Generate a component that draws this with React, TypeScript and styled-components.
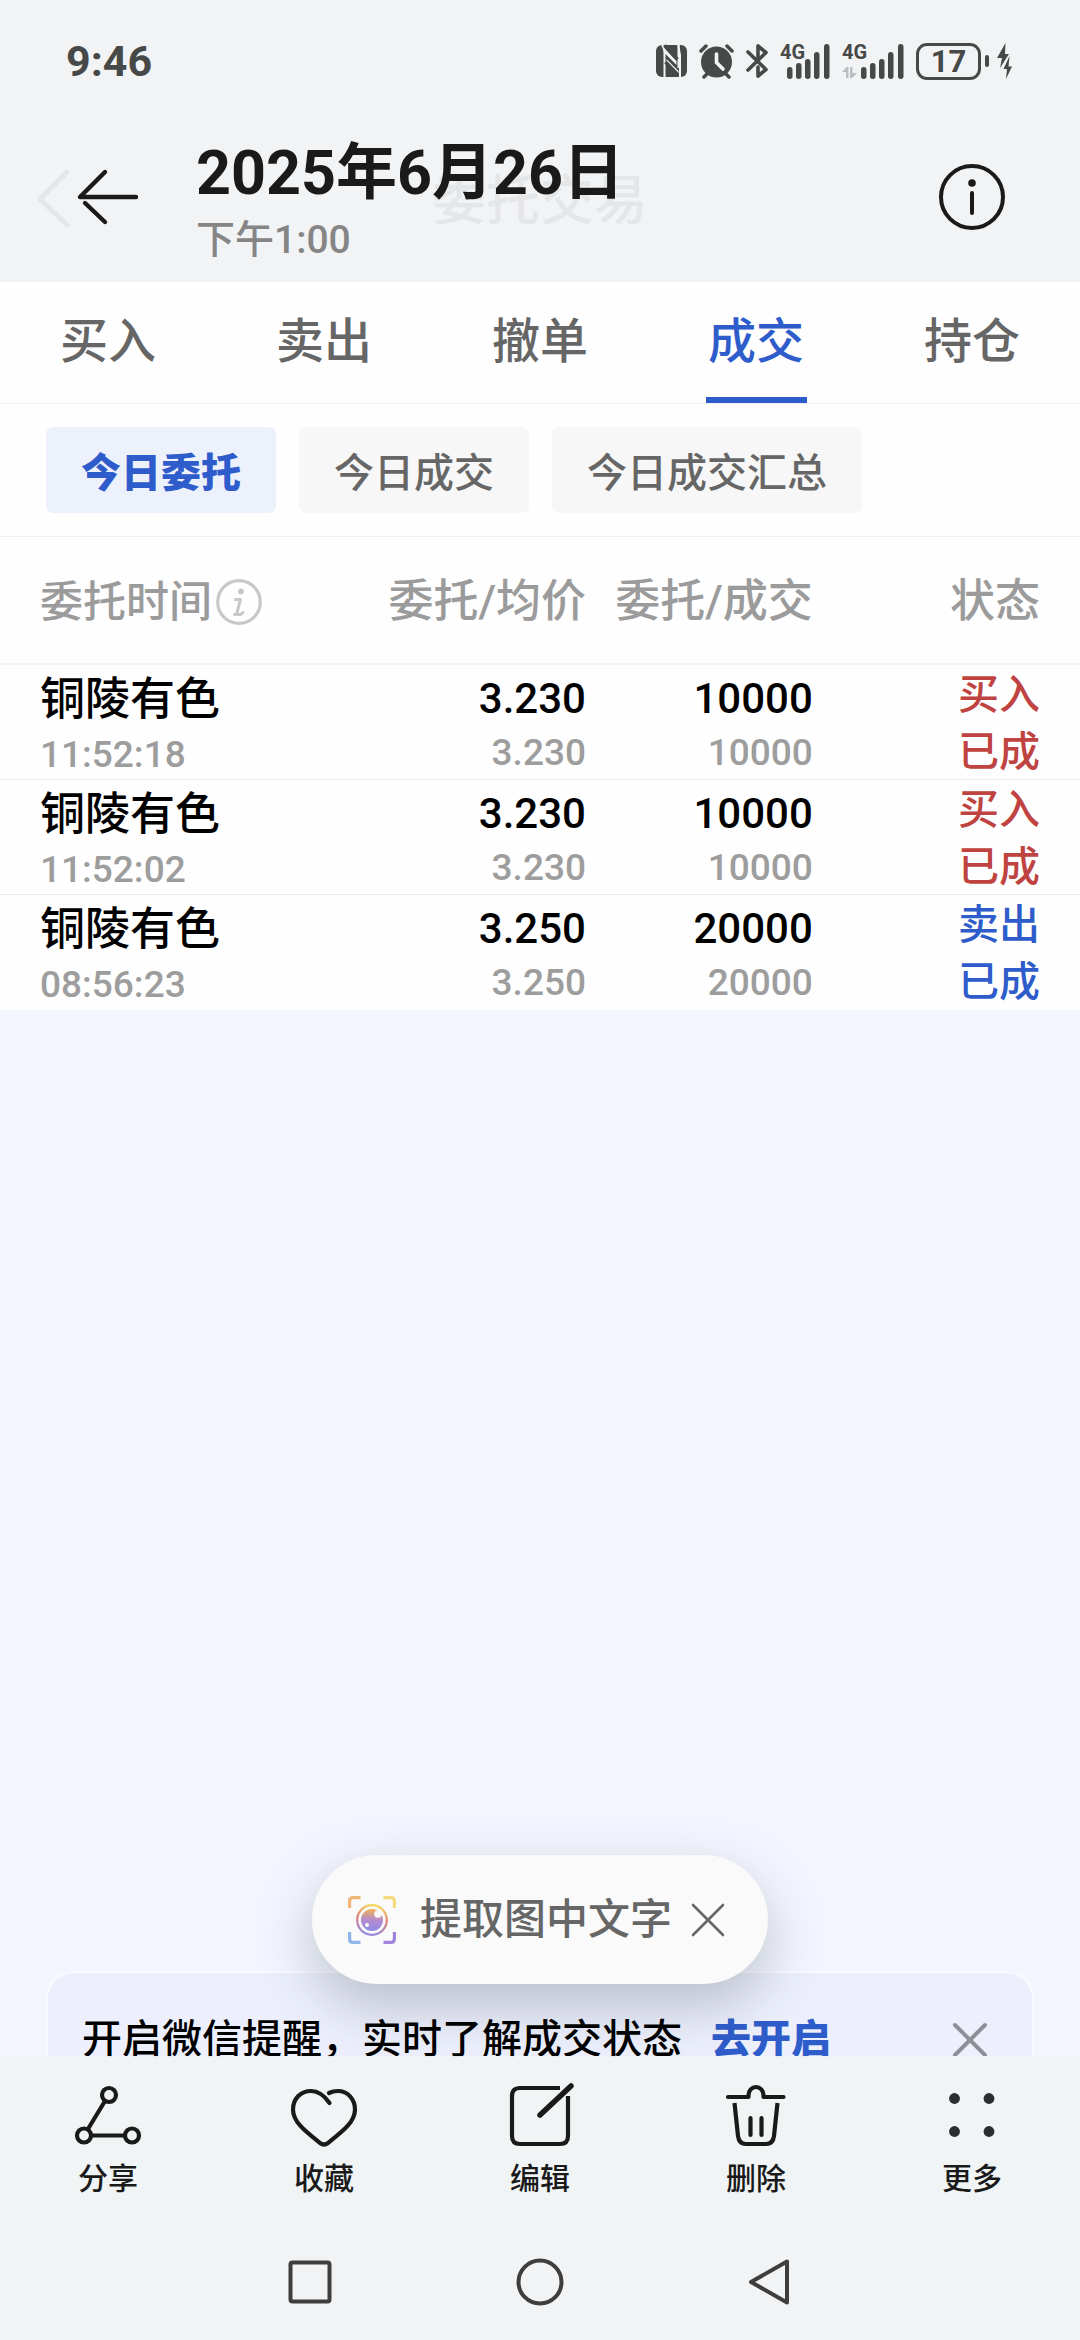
import React, { useState } from "react";
import styled, { createGlobalStyle, css } from "styled-components";

const blue = "#2f5ccb";
const red = "#bf4341";

const GlobalStyle = createGlobalStyle`
  *, *::before, *::after { box-sizing: border-box; }
  body {
    margin: 0;
    background: #f2f3f5;
    font-family: Roboto, "Noto Sans CJK SC", sans-serif;
    color: #1a1a1a;
  }
  button {
    border: 0;
    padding: 0;
    background: none;
    font: inherit;
    color: inherit;
    cursor: pointer;
  }
  svg { display: block; flex: none; }
`;

const Screen = styled.div`
  display: flex;
  flex-direction: column;
  min-height: 100vh;
  background: #f2f3f5;
`;

/* ---------- system status bar ---------- */

const StatusBar = styled.div`
  display: flex;
  align-items: center;
  justify-content: space-between;
  height: 122px;
  padding: 0 68px 0 66px;
  color: #474948;
`;

const Clock = styled.time`
  font-size: 43px;
  line-height: 60px;
  font-weight: 700;
`;

const StatusIcons = styled.div`
  display: flex;
  align-items: center;
  gap: 12px;
`;

const Battery = styled.div`
  display: flex;
  align-items: center;
  gap: 4px;
`;

const BatteryLevel = styled.span`
  width: 65px;
  height: 37px;
  border: 3px solid #474948;
  border-radius: 11px;
  font-size: 31px;
  line-height: 31px;
  font-weight: 700;
  text-align: center;
`;

const BatteryNub = styled.span`
  width: 4px;
  height: 12px;
  border-radius: 2px;
  background: #474948;
`;

/* ---------- viewer header ---------- */

const Header = styled.header`
  position: relative;
  display: flex;
  align-items: center;
  height: 160px;
  padding: 0 72px 10px 72px;
`;

const GhostTitle = styled.div`
  position: absolute;
  inset: 0;
  display: flex;
  align-items: center;
  justify-content: center;
  color: #e5e6e8;
  font-size: 54px;
  line-height: 76px;
  font-weight: 500;
`;

const GhostChevron = styled.svg`
  position: absolute;
  left: 36px;
  top: 46px;
`;

const HeaderButton = styled.button`
  position: relative;
  flex: none;
`;

const Titles = styled.div`
  position: relative;
  flex: 1;
  padding: 12px 0 0 52px;
`;

const Title = styled.h1`
  margin: 0;
  font-size: 61px;
  line-height: 74px;
  font-weight: 700;
`;

const Subtitle = styled.p`
  margin: 0;
  font-size: 39px;
  line-height: 60px;
  font-weight: 500;
  color: #858585;
`;

/* ---------- photographed page ---------- */

const Photo = styled.main`
  position: relative;
  display: flex;
  flex-direction: column;
  flex: 1;
  background: #f3f6fe;
`;

const Tabs = styled.nav`
  display: grid;
  grid-template-columns: repeat(5, 1fr);
  background: #fefefe;
  border-bottom: 1px solid #f0f0f0;
`;

const Tab = styled.button<{ $active: boolean }>`
  display: flex;
  flex-direction: column;
  align-items: center;
  justify-content: space-between;
  height: 121px;
  padding-top: 24px;
  font-size: 48px;
  line-height: 72px;
  font-weight: 500;
  color: ${(p) => (p.$active ? blue : "#666")};

  &::after {
    content: "";
    width: 101px;
    height: 6px;
    background: ${(p) => (p.$active ? blue : "transparent")};
  }
`;

const Chips = styled.div`
  display: flex;
  gap: 23px;
  padding: 23px 46px;
  background: #fefefe;
  border-bottom: 1px solid #f0f0f0;
`;

const Chip = styled.button<{ $active: boolean }>`
  height: 86px;
  padding: 0 35px;
  border-radius: 7px;
  background: #f7f7f7;
  font-size: 40px;
  font-weight: 500;
  color: #666;
  ${(p) =>
    p.$active &&
    css`
      background: #edf1fc;
      font-weight: 900;
      color: ${blue};
    `}
`;

const Orders = styled.table`
  width: 100%;
  table-layout: fixed;
  border-collapse: collapse;
  background: #fefefe;
`;

/* Columns meet 8px after the figures; the outer ones keep the 40px page margin. */
type Side = "first" | "middle" | "last";
const cellPadding = (side: Side) =>
  ({ first: "0 0 0 40px", middle: "0 8px 0 0", last: "0 40px 0 0" })[side];

const HeadCell = styled.th<{ $side: Side; $width: string }>`
  width: ${(p) => p.$width};
  height: 127px;
  padding: ${(p) => cellPadding(p.$side)};
  padding-top: 3px;
  border-bottom: 2px solid #f3f3f3;
  font-size: ${(p) => (p.$side === "first" ? "43px" : "45px")};
  line-height: 60px;
  font-weight: 500;
  color: #9b9b9b;
  text-align: ${(p) => (p.$side === "first" ? "left" : "right")};
  white-space: nowrap;
`;

const HeadLabel = styled.span`
  display: flex;
  align-items: center;
  gap: 4px;
`;

const Row = styled.tr`
  height: 115px;
  &:not(:last-child) { border-bottom: 1px solid #ececec; }
`;

const Cell = styled.td<{ $side: Side }>`
  padding: ${(p) => cellPadding(p.$side)};
  text-align: ${(p) => (p.$side === "first" ? "left" : "right")};
  vertical-align: top;
`;

const Line = styled.div`
  font-weight: 500;
`;

const Name = styled(Line)`
  font-size: 45px;
  line-height: 69px;
  color: #000;
`;

const Figure = styled(Line)`
  font-size: 42px;
  line-height: 67px;
  color: #000;
`;

const Minor = styled(Line)`
  font-size: 37px;
  line-height: 42px;
  color: #9d9d9d;
`;

const TradeSide = styled(Line)<{ $color: string }>`
  font-size: 41px;
  line-height: 61px;
  color: ${(p) => p.$color};
`;

const TradeState = styled(TradeSide)`
  line-height: 53px;
`;

const Banner = styled.aside`
  display: flex;
  align-items: center;
  height: 137px;
  margin: auto 46px -52px;
  padding: 0 44px 0 34px;
  border: 2px solid #fafbff;
  border-radius: 28px;
  background: #edf0fc;
  font-size: 40px;
  line-height: 60px;
  font-weight: 500;
  color: #000;
`;

const BannerLink = styled.a`
  margin: 0 auto 0 29px;
  font-weight: 900;
  color: ${blue};
  text-decoration: none;
`;

const Pill = styled.div`
  position: absolute;
  left: 50%;
  bottom: 72px;
  transform: translateX(-50%);
  display: flex;
  align-items: center;
  height: 129px;
  padding: 0 42px 0 36px;
  border-radius: 65px;
  background: #fafafa;
  box-shadow: 0 22px 56px rgba(40, 45, 60, 0.26);
`;

const PillAction = styled.button`
  display: flex;
  align-items: center;
  gap: 24px;
  margin-right: 18px;
  font-size: 42px;
  line-height: 60px;
  font-weight: 500;
  color: #666;
  white-space: nowrap;
`;

/* ---------- bottom bars ---------- */

const Toolbar = styled.div`
  position: relative;
  display: grid;
  grid-template-columns: repeat(5, 1fr);
  padding: 24px 0 26px;
  background: rgba(240, 243, 244, 0.95);
`;

const Tool = styled.button`
  display: flex;
  flex-direction: column;
  align-items: center;
  gap: 8px;
  font-size: 30px;
  line-height: 38px;
  font-weight: 500;
`;

const NavBar = styled.nav`
  display: flex;
  align-items: center;
  justify-content: center;
  gap: 170px;
  height: 116px;
  color: #3e3e3e;
`;

/* ---------- icons ---------- */

const SignalArt = styled.svg`
  overflow: visible;
`;

const BARS = [
  [0, 24, 12],
  [9, 20, 16],
  [18, 16, 20],
  [27, 9, 27],
  [37, 1, 35],
];

function Signal({ data }: { data?: boolean }) {
  const shift = data ? 19 : 7;
  return (
    <SignalArt width={shift + 43} height="36" viewBox={`0 0 ${shift + 43} 36`} fill="currentColor">
      <text x="0" y="16" fontSize="20" fontWeight="700" fontFamily="Roboto, sans-serif">4G</text>
      {data && (
        <path d="M0 29L4.500 24H6.500V35H4V29ZM8 24H10.500V30H15L10 35H8Z" fill="#bcbdbe" />
      )}
      {BARS.map(([x, y, h]) => (
        <rect key={x} x={shift + x} y={y} width="5.500" height={h} rx="2.700" />
      ))}
    </SignalArt>
  );
}

const NfcIcon = () => (
  <svg width="31" height="34" viewBox="0 0 31 34">
    <rect y="1" width="31" height="32" rx="6" fill="currentColor" />
    <path d="M6 1Q8.500 4 8.500 9V33M22.500 1V24" fill="none" stroke="#f2f3f5" strokeWidth="2" />
    <path d="M8 3.500L20.500 17V21L8 8.500ZM10.500 15L22.500 27V33L10.500 20.500Z" fill="#f2f3f5" />
    <path d="M8.500 1.500L21.500 15.500M9.500 18L23 32" stroke="currentColor" strokeWidth="3.500" />
    <path d="M22.500 1Q23 7 24 11V33" fill="none" stroke="#f2f3f5" strokeWidth="2" />
  </svg>
);

const AlarmIcon = () => (
  <svg width="35" height="36" viewBox="0 0 35 36" fill="none" strokeLinecap="round">
    <circle cx="17.500" cy="19" r="15.500" fill="currentColor" />
    <path d="M2 8L7 3M33 8L28 3M5 34L9 30M30 34L26 30" stroke="currentColor" strokeWidth="3.500" />
    <path d="M17.500 11V19.500L24 26" stroke="#f2f3f5" strokeWidth="3.600" />
  </svg>
);

const BluetoothIcon = () => (
  <svg width="22" height="36" viewBox="0 0 22 36" fill="none" stroke="currentColor" strokeWidth="3.600" strokeLinecap="round" strokeLinejoin="round">
    <path d="M2 9L20 26.500L12 33V24M2 27L20 9.500L12 3V14" />
  </svg>
);

const BoltsIcon = () => (
  <svg width="19" height="36" viewBox="-4 0 19 36" fill="currentColor">
    <path d="M8.500 0L0 15H5L3 25L12 11H8ZM12.500 13L6.500 26H10L9 36L15 23.500H11.500Z" />
  </svg>
);

const BackIcon = () => (
  <svg width="72" height="72" viewBox="0 0 72 72" fill="none" stroke="currentColor" strokeWidth="4.400" strokeLinecap="round">
    <path d="M64 36H8L33 11" strokeLinejoin="round" />
    <path d="M13 42L33 61" />
  </svg>
);

const InfoIcon = () => (
  <svg width="72" height="72" viewBox="0 0 72 72" fill="none" stroke="currentColor" strokeWidth="4">
    <circle cx="36" cy="36" r="31" />
    <path d="M36 32V52" strokeLinecap="round" />
    <circle cx="36" cy="22" r="3.800" fill="currentColor" stroke="none" />
  </svg>
);

const HintIcon = () => (
  <svg width="46" height="46" viewBox="0 0 46 46" fill="none" stroke="#c8c8c8">
    <circle cx="23" cy="23" r="21.300" strokeWidth="3.200" />
    <path d="M19.500 20.500H24.500L20.500 35.500H24Q26 35 27 33.500M18.500 35.500H21" strokeWidth="3" strokeLinecap="round" strokeLinejoin="round" />
    <circle cx="25" cy="12.500" r="2.900" fill="#c8c8c8" stroke="none" />
  </svg>
);

const CrossIcon = ({ color, weight }: { color: string; weight: number }) => (
  <svg width="36" height="36" viewBox="0 0 36 36" fill="none" stroke={color} strokeWidth={weight} strokeLinecap="round">
    <path d="M3 3L33 33M33 3L3 33" />
  </svg>
);

const LensIcon = () => (
  <svg width="48" height="48" viewBox="0 0 48 48" fill="none">
    <defs>
      <linearGradient id="lensRing" x1="0.600" y1="0" x2="0.400" y2="1">
        <stop offset="0" stopColor="#f5d95c" />
        <stop offset="0.450" stopColor="#e08078" />
        <stop offset="1" stopColor="#9288de" />
      </linearGradient>
      <linearGradient id="lensBall" x1="0.500" y1="0" x2="0.450" y2="1">
        <stop offset="0" stopColor="#f2b050" />
        <stop offset="0.500" stopColor="#b58bcf" />
        <stop offset="1" stopColor="#8d8be6" />
      </linearGradient>
    </defs>
    <g strokeWidth="3.200">
      <path d="M1.600 12V5Q1.600 1.600 5 1.600H12.500" stroke="#eeb777" />
      <path d="M35.500 1.600H43Q46.400 1.600 46.400 5V12" stroke="#f5da80" />
      <path d="M1.600 36V43Q1.600 46.400 5 46.400H12.500" stroke="#8fb6e8" />
      <path d="M35.500 46.400H43Q46.400 46.400 46.400 43V36" stroke="#a184dc" />
    </g>
    <circle cx="24" cy="24" r="14.800" stroke="url(#lensRing)" strokeWidth="2.200" />
    <circle cx="24" cy="24" r="11" fill="url(#lensBall)" />
    <circle cx="30" cy="18" r="3.800" fill="#fafafa" />
    <circle cx="19" cy="29" r="2" fill="#fafafa" />
  </svg>
);

const toolIcon = {
  width: 72,
  height: 72,
  viewBox: "0 0 72 72",
  fill: "none",
  stroke: "currentColor",
  strokeWidth: 4.2,
  strokeLinecap: "round" as const,
  "aria-hidden": true,
};

const ShareIcon = () => (
  <svg {...toolIcon}>
    <circle cx="37" cy="15" r="7" />
    <circle cx="12" cy="55.500" r="7" />
    <circle cx="60" cy="55.500" r="7" />
    <path d="M33 21L16 49M19 55.500H53" />
  </svg>
);

const HeartIcon = () => (
  <svg {...toolIcon}>
    <path d="M41.500 23C36 15 30 11 23 11C12.500 11 5 19 5 29.500C5 42 17 51 32 63Q36 66 40 63C55 51 67 42 67 29.500C67 19 59.500 11 50 11Q45 11 41 13" />
  </svg>
);

const EditIcon = () => (
  <svg {...toolIcon}>
    <path d="M56 8H16Q8 8 8 16V56Q8 64 16 64H56Q64 64 64 56V16" strokeLinecap="butt" />
    <path d="M67 6L36 35" strokeWidth="5.500" />
  </svg>
);

const TrashIcon = () => (
  <svg {...toolIcon}>
    <path d="M8 17H28.500V15A7.500 8 0 0 1 43.500 15V17H63.500" strokeLinejoin="round" />
    <path d="M14.500 23L18 56Q19 64 26 64H46Q53 64 54 56L57.500 23" strokeLinecap="butt" />
    <path d="M30.500 38V55M41.500 38V55" />
  </svg>
);

const MoreIcon = () => (
  <svg {...toolIcon} fill="#2c2d2e" stroke="none">
    <circle cx="18.500" cy="18.500" r="5.400" />
    <circle cx="53" cy="18.500" r="5.400" />
    <circle cx="18.500" cy="51.500" r="5.400" />
    <circle cx="53" cy="51.500" r="5.400" />
  </svg>
);

const navIcon = {
  width: 60,
  height: 60,
  viewBox: "0 0 60 60",
  fill: "none",
  stroke: "currentColor",
  strokeWidth: 4,
  strokeLinejoin: "round" as const,
  "aria-hidden": true,
};

/* ---------- data ---------- */

const TABS = ["买入", "卖出", "撤单", "成交", "持仓"];
const CHIPS = ["今日委托", "今日成交", "今日成交汇总"];
const ORDERS = [
  { name: "铜陵有色", time: "11:52:18", price: "3.230", amount: "10000", side: "买入" },
  { name: "铜陵有色", time: "11:52:02", price: "3.230", amount: "10000", side: "买入" },
  { name: "铜陵有色", time: "08:56:23", price: "3.250", amount: "20000", side: "卖出" },
];
const TOOLS = [
  { label: "分享", Icon: ShareIcon },
  { label: "收藏", Icon: HeartIcon },
  { label: "编辑", Icon: EditIcon },
  { label: "删除", Icon: TrashIcon },
  { label: "更多", Icon: MoreIcon },
];

export default function App() {
  const [tab, setTab] = useState("成交");
  const [chip, setChip] = useState("今日委托");

  return (
    <Screen>
      <GlobalStyle />
      <StatusBar>
        <Clock>9:46</Clock>
        <StatusIcons>
          <NfcIcon />
          <AlarmIcon />
          <BluetoothIcon />
          <Signal />
          <Signal data />
          <Battery>
            <BatteryLevel>17</BatteryLevel>
            <BatteryNub />
            <BoltsIcon />
          </Battery>
        </StatusIcons>
      </StatusBar>

      <Header>
        <GhostTitle aria-hidden="true">
          <GhostChevron width="36" height="60" viewBox="0 0 36 60" fill="none" stroke="currentColor" strokeWidth="5" strokeLinecap="round" strokeLinejoin="round">
            <path d="M31 4L4 31L31 57" />
          </GhostChevron>
          委托交易
        </GhostTitle>
        <HeaderButton aria-label="返回"><BackIcon /></HeaderButton>
        <Titles>
          <Title>2025年6月26日</Title>
          <Subtitle>下午1:00</Subtitle>
        </Titles>
        <HeaderButton aria-label="详情"><InfoIcon /></HeaderButton>
      </Header>

      <Photo>
        <Tabs>
          {TABS.map((t) => (
            <Tab key={t} $active={t === tab} onClick={() => setTab(t)}>{t}</Tab>
          ))}
        </Tabs>
        <Chips>
          {CHIPS.map((c) => (
            <Chip key={c} $active={c === chip} onClick={() => setChip(c)}>{c}</Chip>
          ))}
        </Chips>
        <Orders>
          <thead>
            <tr>
              <HeadCell $side="first" $width="33%"><HeadLabel>委托时间<HintIcon /></HeadLabel></HeadCell>
              <HeadCell $side="middle" $width="22%">委托/均价</HeadCell>
              <HeadCell $side="middle" $width="21%">委托/成交</HeadCell>
              <HeadCell $side="last" $width="24%">状态</HeadCell>
            </tr>
          </thead>
          <tbody>
            {ORDERS.map((o) => {
              const color = o.side === "买入" ? red : blue;
              return (
                <Row key={o.time}>
                  <Cell $side="first">
                    <Name>{o.name}</Name>
                    <Minor>{o.time}</Minor>
                  </Cell>
                  <Cell $side="middle">
                    <Figure>{o.price}</Figure>
                    <Minor>{o.price}</Minor>
                  </Cell>
                  <Cell $side="middle">
                    <Figure>{o.amount}</Figure>
                    <Minor>{o.amount}</Minor>
                  </Cell>
                  <Cell $side="last">
                    <TradeSide $color={color}>{o.side}</TradeSide>
                    <TradeState $color={color}>已成</TradeState>
                  </Cell>
                </Row>
              );
            })}
          </tbody>
        </Orders>
        <Banner>
          开启微信提醒，实时了解成交状态
          <BannerLink href="#open">去开启</BannerLink>
          <button aria-label="关闭提醒"><CrossIcon color="#8f9096" weight={4} /></button>
        </Banner>
        <Pill>
          <PillAction><LensIcon />提取图中文字</PillAction>
          <button aria-label="关闭"><CrossIcon color="#666" weight={2.6} /></button>
        </Pill>
      </Photo>

      <Toolbar>
        {TOOLS.map(({ label, Icon }) => (
          <Tool key={label}><Icon />{label}</Tool>
        ))}
      </Toolbar>
      <NavBar>
        <button aria-label="最近任务">
          <svg {...navIcon}><rect x="10.500" y="10.500" width="39" height="39" rx="2" /></svg>
        </button>
        <button aria-label="主屏幕">
          <svg {...navIcon}><circle cx="30" cy="30" r="21.500" /></svg>
        </button>
        <button aria-label="后退">
          <svg {...navIcon}><path d="M47 9.500V50.500L11 30Z" /></svg>
        </button>
      </NavBar>
    </Screen>
  );
}
